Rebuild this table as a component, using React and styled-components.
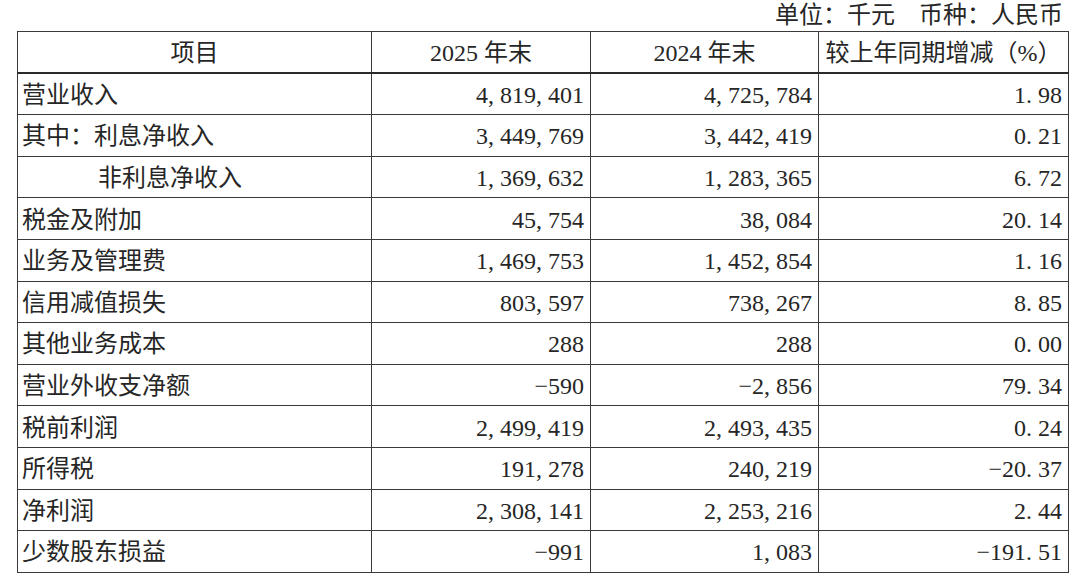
import styled, { createGlobalStyle } from "styled-components";

const GlobalStyle = createGlobalStyle`
  body {
    margin: 0;
    background: #fff;
  }
`;

// 표 데이터
const rows = [
  { name: "营业收入", y25: "4,819,401", y24: "4,725,784", rate: "1.98" },
  { name: "其中：利息净收入", y25: "3,449,769", y24: "3,442,419", rate: "0.21" },
  { name: "非利息净收入", y25: "1,369,632", y24: "1,283,365", rate: "6.72", indent: true },
  { name: "税金及附加", y25: "45,754", y24: "38,084", rate: "20.14" },
  { name: "业务及管理费", y25: "1,469,753", y24: "1,452,854", rate: "1.16" },
  { name: "信用减值损失", y25: "803,597", y24: "738,267", rate: "8.85" },
  { name: "其他业务成本", y25: "288", y24: "288", rate: "0.00" },
  { name: "营业外收支净额", y25: "−590", y24: "−2,856", rate: "79.34" },
  { name: "税前利润", y25: "2,499,419", y24: "2,493,435", rate: "0.24" },
  { name: "所得税", y25: "191,278", y24: "240,219", rate: "−20.37" },
  { name: "净利润", y25: "2,308,141", y24: "2,253,216", rate: "2.44" },
  { name: "少数股东损益", y25: "−991", y24: "1,083", rate: "−191.51" },
];

//숫자 안의 구두점 폭을 반각으로 맞춤
function Num({ value }) {
  return (
    <>
      {value.split(/([,.])/).map((part, i) =>
        part === "," || part === "." ? (
          <Punct key={i}>{part}</Punct>
        ) : (
          <span key={i}>{part}</span>
        )
      )}
    </>
  );
}

export default function App() {
  return (
    <Page>
      <GlobalStyle />
      <Unit>单位：千元　币种：人民币</Unit>
      <Table>
        <colgroup>
          <col style={{ width: 354 }} />
          <col style={{ width: 219 }} />
          <col style={{ width: 228 }} />
          <col style={{ width: 250 }} />
        </colgroup>
        <thead>
          <tr>
            <Th>项目</Th>
            <Th>2025 年末</Th>
            <Th>2024 年末</Th>
            <Th>较上年同期增减（%）</Th>
          </tr>
        </thead>
        <tbody>
          {rows.map((r) => (
            <tr key={r.name}>
              <NameCell $indent={r.indent}>{r.name}</NameCell>
              <NumCell>
                <Num value={r.y25} />
              </NumCell>
              <NumCell>
                <Num value={r.y24} />
              </NumCell>
              <NumCell>
                <Num value={r.rate} />
              </NumCell>
            </tr>
          ))}
        </tbody>
      </Table>
    </Page>
  );
}

const Page = styled.div`
  width: 1080px;
  height: 579px;
  padding-left: 17px;
  box-sizing: border-box;
  font-family: "Liberation Serif", "Noto Sans CJK SC", serif;
  font-size: 24px;
  color: #262626;
  overflow: hidden;
`;

const Unit = styled.div`
  width: 1046px;
  height: 31px;
  line-height: 30px;
  text-align: right;
  white-space: pre;
`;

const Table = styled.table`
  width: 1051px;
  border-collapse: collapse;
  table-layout: fixed;
  border: 1.5px solid #3a3a3a;

  tr {
    height: 41.6px;
  }
  th,
  td {
    border: 1.5px solid #3a3a3a;
    line-height: 1;
    white-space: nowrap;
    vertical-align: middle;
  }
  thead tr th {
    border-bottom: 2px solid #2a2a2a;
  }
`;

const Th = styled.th`
  font-weight: 400;
  text-align: center;
  padding: 2px 0 0;
`;

const NameCell = styled.td`
  text-align: left;
  padding: 2px 4px 0 ${(p) => (p.$indent ? "80px" : "4px")};
`;

const NumCell = styled.td`
  text-align: right;
  padding: 2px 6px 0 4px;
`;

const Punct = styled.span`
  display: inline-block;
  width: 12px;
  text-align: left;
`;
